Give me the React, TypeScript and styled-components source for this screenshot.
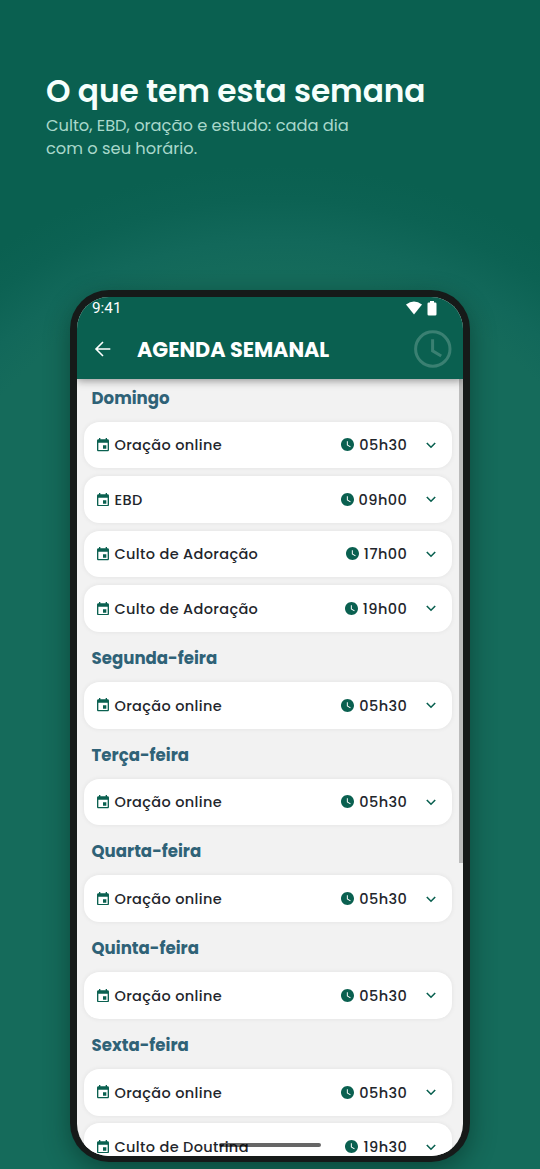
import React from 'react';
import styled, { createGlobalStyle } from 'styled-components';

const GlobalStyle = createGlobalStyle`
  *, *::before, *::after { box-sizing: border-box; }
  html, body { margin: 0; padding: 0; }
  body {
    font-family: Poppins, Inter, "Open Sans", sans-serif;
    overflow: hidden;
  }
`;

const Page = styled.main`
  width: 540px;
  height: 1169px;
  overflow: hidden;
  background:
    radial-gradient(ellipse 465px 420px at 275px 585px, #156b5b 0%, #156b5b 74%, #12685a 82%, #0c6253 92%, #0a6050 100%) 0 0 / 100% 585px no-repeat,
    #156b5b;
`;

const Intro = styled.header`
  height: 290px;
  padding: 68px 46px 0;
`;

const Headline = styled.h1`
  margin: 0;
  font-size: 31.2px;
  line-height: 46px;
  font-weight: 600;
  letter-spacing: -0.05px;
  white-space: nowrap;
  color: #f6fffc;
`;

const Lead = styled.p`
  width: 320px;
  margin: 1px 0 0;
  font-size: 16.25px;
  line-height: 22.7px;
  font-weight: 400;
  color: #a9d8cb;
`;

const Phone = styled.section`
  width: 400px;
  height: 872px;
  margin-left: 70px;
  padding: 6.5px 7px 6.5px 6.5px;
  border-radius: 39px;
  background: #161a19;
  box-shadow: 0 8px 26px rgba(0, 30, 22, 0.45);
`;

const Screen = styled.div`
  position: relative;
  display: flex;
  flex-direction: column;
  height: 100%;
  border-radius: 32px;
  overflow: hidden;
  background: #f2f2f2;
`;

const TopBar = styled.div`
  position: relative;
  z-index: 1;
  flex: none;
  height: 82.5px;
  background: #0a6050;
  color: #fff;
  box-shadow: 0 2px 8px rgba(0, 0, 0, 0.38);
`;

const StatusBar = styled.div`
  display: flex;
  align-items: center;
  justify-content: space-between;
  height: 23px;
  padding: 0 26px 0 15.5px;
  font-family: Roboto, sans-serif;
  font-size: 15.3px;
`;

const StatusIcons = styled.div`
  display: flex;
  align-items: center;
  gap: 5px;
`;

const AppBar = styled.div`
  display: flex;
  align-items: center;
  height: 59.5px;
  padding: 0 11.5px 0 17.5px;
`;

const AppTitle = styled.h2`
  flex: 1;
  margin: 1px 0 0 25px;
  font-size: 20.8px;
  line-height: 28px;
  font-weight: 700;
  white-space: nowrap;
`;

const Body = styled.div`
  display: flex;
  flex: 1;
  min-height: 0;
  align-items: flex-start;
`;

const Agenda = styled.div`
  flex: 1;
  padding: 0 7px 0 7.5px;
`;

const Day = styled.section`
  padding-bottom: 7.5px;
`;

const DayName = styled.h3`
  margin: 0;
  height: 42.5px;
  padding: 7.5px 0 0 7.5px;
  font-size: 16.6px;
  line-height: 24px;
  font-weight: 700;
  color: #2f6277;
`;

const Cards = styled.div`
  display: flex;
  flex-direction: column;
  gap: 7.75px;
`;

const Card = styled.article`
  display: flex;
  align-items: center;
  height: 46.75px;
  padding: 0 14px 0 12.8px;
  border-radius: 15.5px;
  background: #fff;
  color: #22252b;
  box-shadow: 0 0 5px rgba(0, 0, 0, 0.07);
  font-size: 14.5px;
  line-height: 22px;
  font-weight: 500;
  letter-spacing: 0.35px;
  white-space: nowrap;
`;

const EventName = styled.span`
  flex: 1;
  margin: 1px 0 0 5.7px;
`;

const EventTime = styled.span`
  margin: 1px 16.7px 0 5px;
  letter-spacing: 0.45px;
`;

const ScrollThumb = styled.div`
  width: 4px;
  height: 484px;
  background: #bcbcbc;
`;

const HomeIndicator = styled.div`
  position: absolute;
  left: 50%;
  bottom: 9px;
  width: 102px;
  height: 4px;
  margin-left: -51px;
  border-radius: 2px;
  background: rgba(0, 0, 0, 0.6);
`;

const Icon = styled.svg`
  display: block;
  flex: none;
`;

const WifiIcon = () => (
  <Icon width="16" height="14" viewBox="0 0 16 14" fill="#fff">
    <path d="M0 3.6Q8-2.4 16 3.6L8 13.4Z" />
  </Icon>
);

const BatteryIcon = () => (
  <Icon width="10" height="15" viewBox="0 0 10 15" fill="#fff">
    <path d="M3 0h4v1.5h1.2Q9.500 1.500 9.500 2.800v10.400q0 1.300-1.300 1.300H1.800Q.5 14.500.5 13.200V2.800Q.5 1.500 1.800 1.500H3Z" />
  </Icon>
);

const BackIcon = () => (
  <Icon width="18" height="18" viewBox="0 0 18 18" fill="none" stroke="#fff" strokeWidth="1.6">
    <path d="M16.300 9H2.500M9 2 2 9l7 7" />
  </Icon>
);

const HeaderClock = () => (
  <Icon width="38" height="38" viewBox="0 0 38 38" fill="none" stroke="#3a8072" strokeWidth="3">
    <circle cx="18.8" cy="19" r="17.2" />
    <path d="M18.600 9.200v11.600l8.600 5.200" />
  </Icon>
);

const CalendarIcon = () => (
  <Icon width="12" height="13.3" viewBox="3 1 18 20" fill="#0a6050">
    <path d="M17 12h-5v5h5v-5zM16 1v2H8V1H6v2H5c-1.110 0-1.990.9-1.990 2L3 19c0 1.100.89 2 2 2h14c1.100 0 2-.9 2-2V5c0-1.100-.9-2-2-2h-1V1h-2zm3 18H5V8h14v11z" />
  </Icon>
);

const ClockIcon = () => (
  <Icon width="13" height="13" viewBox="2 2 20 20" fill="#0a6050">
    <path d="M12 2C6.500 2 2 6.500 2 12s4.500 10 10 10 10-4.500 10-10S17.500 2 12 2zm4.200 14.200L11 13V7h1.500v5.200l4.500 2.700-.8 1.300z" />
  </Icon>
);

const ChevronIcon = () => (
  <Icon width="14" height="14" viewBox="0 0 14 14" fill="none" stroke="#0a6050" strokeWidth="1.6">
    <path d="m2.800 5 4.200 4.200 4.200-4.200" />
  </Icon>
);

type Event = { name: string; time: string };
type DayPlan = { day: string; events: Event[] };

const prayer: Event = { name: 'Oração online', time: '05h30' };

const week: DayPlan[] = [
  {
    day: 'Domingo',
    events: [
      prayer,
      { name: 'EBD', time: '09h00' },
      { name: 'Culto de Adoração', time: '17h00' },
      { name: 'Culto de Adoração', time: '19h00' },
    ],
  },
  { day: 'Segunda-feira', events: [prayer] },
  { day: 'Terça-feira', events: [prayer] },
  { day: 'Quarta-feira', events: [prayer] },
  { day: 'Quinta-feira', events: [prayer] },
  { day: 'Sexta-feira', events: [prayer, { name: 'Culto de Doutrina', time: '19h30' }] },
];

const EventCard = ({ name, time }: Event) => (
  <Card>
    <CalendarIcon />
    <EventName>{name}</EventName>
    <ClockIcon />
    <EventTime>{time}</EventTime>
    <ChevronIcon />
  </Card>
);

export default function App() {
  return (
    <Page>
      <GlobalStyle />
      <Intro>
        <Headline>O que tem esta semana</Headline>
        <Lead>Culto, EBD, oração e estudo: cada dia com o seu horário.</Lead>
      </Intro>
      <Phone>
        <Screen>
          <TopBar>
            <StatusBar>
              <span>9:41</span>
              <StatusIcons>
                <WifiIcon />
                <BatteryIcon />
              </StatusIcons>
            </StatusBar>
            <AppBar>
              <BackIcon />
              <AppTitle>AGENDA SEMANAL</AppTitle>
              <HeaderClock />
            </AppBar>
          </TopBar>
          <Body>
            <Agenda>
              {week.map(({ day, events }) => (
                <Day key={day}>
                  <DayName>{day}</DayName>
                  <Cards>
                    {events.map((event) => (
                      <EventCard key={event.name + event.time} {...event} />
                    ))}
                  </Cards>
                </Day>
              ))}
            </Agenda>
            <ScrollThumb />
          </Body>
          <HomeIndicator />
        </Screen>
      </Phone>
    </Page>
  );
}
